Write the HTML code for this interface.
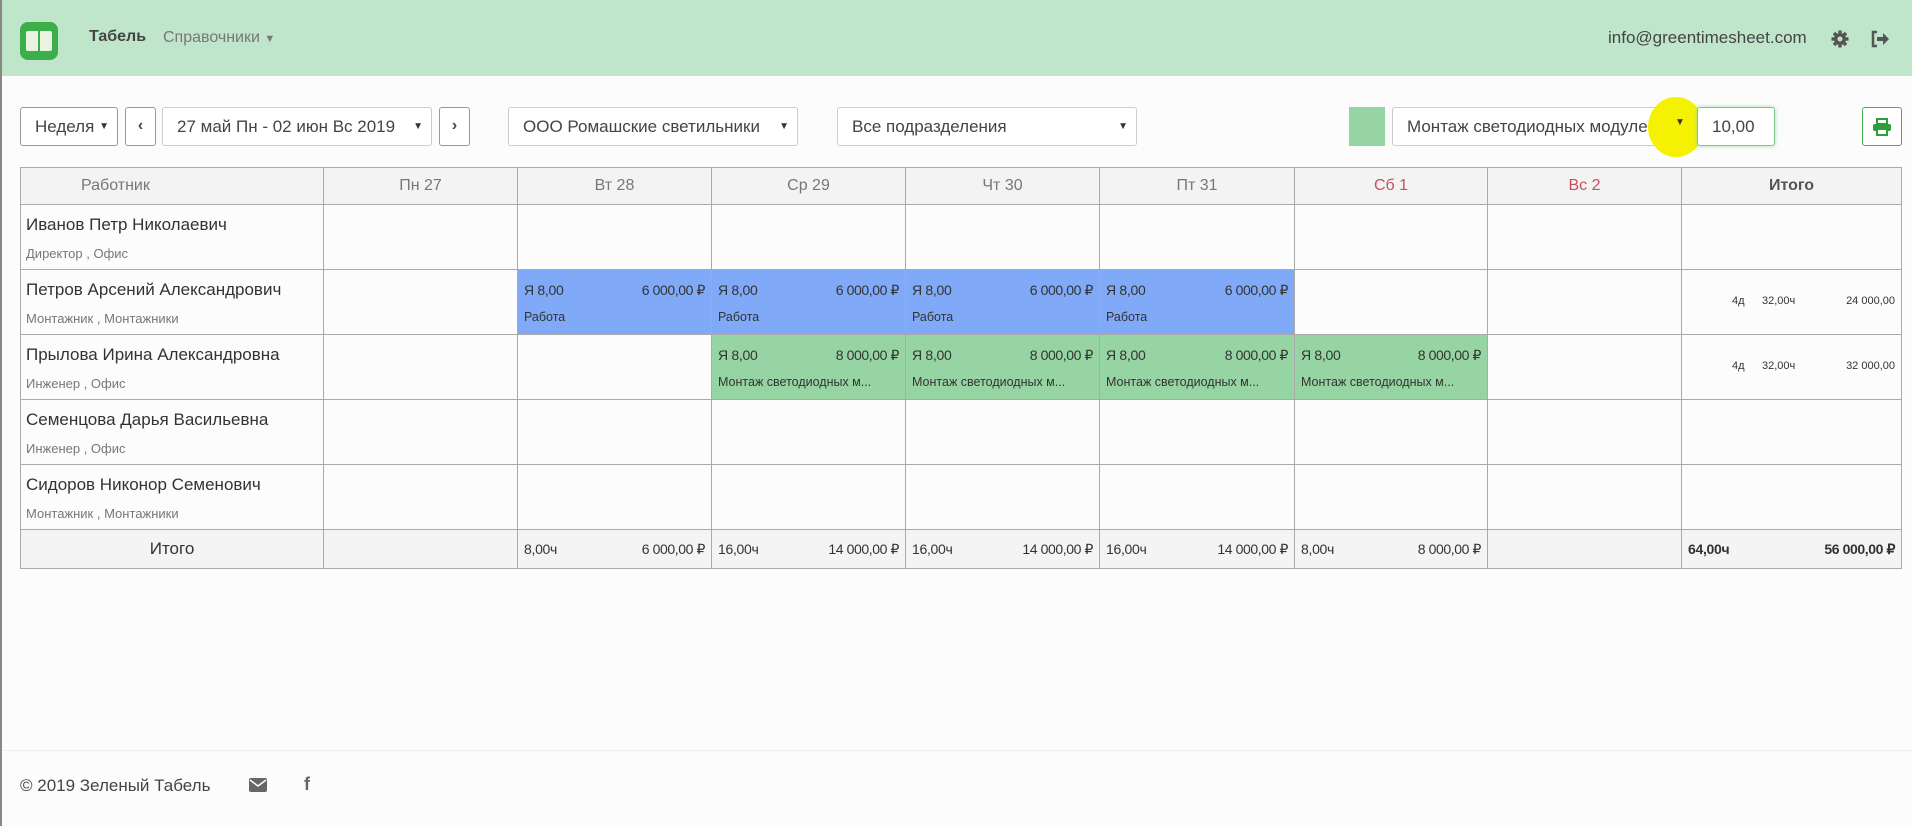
<!DOCTYPE html>
<html><head><meta charset="utf-8"><style>
*{box-sizing:border-box;margin:0;padding:0}
body{width:1912px;height:826px;background:#fcfcfc;font-family:"Liberation Sans",sans-serif;color:#333;position:relative;overflow:hidden;border-left:2px solid #888}
.abs{position:absolute}
.hdr{left:0;top:0;width:1912px;height:76px;background:#bfe6cb}
.sel{position:absolute;top:107px;height:39px;border:1px solid #ccc;border-radius:3px;background:#fff;font-size:17px;line-height:37px;padding-left:14px;color:#444}
.sel .c{position:absolute;right:8px;top:0;font-size:10px;color:#333}
.btn{position:absolute;top:107px;height:39px;border:1px solid #999;border-radius:3px;background:#fff;text-align:center;line-height:36px;font-size:16px;font-weight:bold;color:#444}
table{position:absolute;left:18px;top:167px;border-collapse:collapse;table-layout:fixed}
td,th{border:1px solid #aaa;padding:0;position:relative;vertical-align:top}
th{height:37px;background:#f3f3f3;font-weight:normal;font-size:16px;color:#777;line-height:36px}
tr.r td{height:65px}
.nm{position:absolute;left:5px;top:10px;font-size:17px;color:#333;white-space:nowrap}
.sb{position:absolute;left:5px;top:41px;font-size:13px;color:#777;white-space:nowrap}
.blue{background:#80a9f7}.green{background:#97d4a3}
.t1{position:absolute;left:6px;top:12px;font-size:14px;color:#333;letter-spacing:-0.3px}
.t2{position:absolute;right:6px;top:12px;font-size:14px;color:#333;letter-spacing:-0.4px}
.t3{position:absolute;left:6px;top:40px;font-size:12.5px;color:#333;white-space:nowrap}
.tot td{height:39px;background:#f4f4f4}
.tot .t1,.tot .t2{top:11px}
.sm{position:absolute;top:25px;font-size:11px;color:#333}
</style></head><body>
<div class="abs hdr"></div>
<div class="abs" style="left:18px;top:22px;width:38px;height:38px;border-radius:8px;background:#3cae4a">
<div class="abs" style="left:6px;top:9px;width:26px;height:20px;background:#e9f3df;border-radius:2px"></div>
<div class="abs" style="left:18px;top:9px;width:2px;height:20px;background:#3cae4a"></div>
</div>
<div class="abs" style="left:87px;top:28px;font-size:16px;font-weight:bold;color:#444">Табель</div>
<div class="abs" style="left:161px;top:29px;font-size:16px;color:#777">Справочники <span style="font-size:11px">▼</span></div>
<div class="abs" style="left:1606px;top:28px;font-size:17px;color:#444">info@greentimesheet.com</div>
<svg class="abs" style="left:1829px;top:30px" width="18" height="18" viewBox="0 0 18 18"><g fill="#555"><circle cx="9" cy="9" r="6"/><rect x="7.3" y="0.5" width="3.4" height="17"/><rect x="0.5" y="7.3" width="17" height="3.4"/><rect x="7.3" y="0.5" width="3.4" height="17" transform="rotate(45 9 9)"/><rect x="7.3" y="0.5" width="3.4" height="17" transform="rotate(-45 9 9)"/></g><circle cx="9" cy="9" r="2.5" fill="#bfe6cb"/></svg>
<svg class="abs" style="left:1868px;top:30px" width="20" height="18" viewBox="0 0 20 18"><path d="M7 2H3v14h4" fill="none" stroke="#555" stroke-width="2.5"/><path d="M7 7h6V3l6 6-6 6v-4H7z" fill="#555"/></svg>

<div class="sel" style="left:18px;width:98px;border-color:#999">Неделя<span class="c">▼</span></div>
<div class="btn" style="left:123px;width:31px">‹</div>
<div class="sel" style="left:160px;width:270px">27 май Пн - 02 июн Вс 2019<span class="c">▼</span></div>
<div class="btn" style="left:437px;width:31px">›</div>
<div class="sel" style="left:506px;width:290px">ООО Ромашские светильники<span class="c">▼</span></div>
<div class="sel" style="left:835px;width:300px">Все подразделения<span class="c">▼</span></div>
<div class="abs" style="left:1347px;top:107px;width:36px;height:39px;background:#97d4a3"></div>
<div class="sel" style="left:1390px;width:299px;overflow:hidden;white-space:nowrap;padding-right:30px">Монтаж светодиодных модулей</div>
<div class="abs" style="left:1646px;top:97px;width:56px;height:60px;border-radius:50%;background:#f4f200"></div>
<div class="abs" style="left:1673px;top:117px;font-size:10px">▼</div>
<div class="sel" style="left:1695px;width:78px;border-color:#7ac98a;box-shadow:0 0 4px #9ed9aa">10,00</div>
<div class="btn" style="left:1860px;width:40px;border-color:#4caf50">
<svg width="20" height="18" viewBox="0 0 20 18" style="margin-top:10px"><rect x="5" y="1" width="10" height="5" fill="none" stroke="#2e9e3c" stroke-width="2"/><rect x="1" y="6" width="18" height="7" rx="2" fill="#2e9e3c"/><rect x="5" y="11" width="10" height="6" fill="#fff" stroke="#2e9e3c" stroke-width="2"/></svg></div>

<table>
<colgroup><col style="width:303px"><col style="width:194px"><col style="width:194px"><col style="width:194px"><col style="width:194px"><col style="width:195px"><col style="width:193px"><col style="width:194px"><col style="width:220px"></colgroup>
<tr><th style="text-align:left;padding-left:60px">Работник</th><th>Пн 27</th><th>Вт 28</th><th>Ср 29</th><th>Чт 30</th><th>Пт 31</th><th style="color:#c9505c">Сб 1</th><th style="color:#c9505c">Вс 2</th><th style="font-weight:bold;color:#555">Итого</th></tr>
<tr class="r"><td><div class="nm">Иванов Петр Николаевич</div><div class="sb">Директор , Офис</div></td><td></td><td></td><td></td><td></td><td></td><td></td><td></td><td></td></tr>
<tr class="r"><td><div class="nm">Петров Арсений Александрович</div><div class="sb">Монтажник , Монтажники</div></td><td></td>
<td class="blue"><div class="t1">Я 8,00</div><div class="t2">6 000,00 ₽</div><div class="t3">Работа</div></td>
<td class="blue"><div class="t1">Я 8,00</div><div class="t2">6 000,00 ₽</div><div class="t3">Работа</div></td>
<td class="blue"><div class="t1">Я 8,00</div><div class="t2">6 000,00 ₽</div><div class="t3">Работа</div></td>
<td class="blue"><div class="t1">Я 8,00</div><div class="t2">6 000,00 ₽</div><div class="t3">Работа</div></td>
<td></td><td></td><td><span class="sm" style="left:50px">4д</span><span class="sm" style="left:80px">32,00ч</span><span class="sm" style="right:6px">24 000,00</span></td></tr>
<tr class="r"><td><div class="nm">Прылова Ирина Александровна</div><div class="sb">Инженер , Офис</div></td><td></td><td></td>
<td class="green"><div class="t1">Я 8,00</div><div class="t2">8 000,00 ₽</div><div class="t3">Монтаж светодиодных м...</div></td>
<td class="green"><div class="t1">Я 8,00</div><div class="t2">8 000,00 ₽</div><div class="t3">Монтаж светодиодных м...</div></td>
<td class="green"><div class="t1">Я 8,00</div><div class="t2">8 000,00 ₽</div><div class="t3">Монтаж светодиодных м...</div></td>
<td class="green"><div class="t1">Я 8,00</div><div class="t2">8 000,00 ₽</div><div class="t3">Монтаж светодиодных м...</div></td>
<td></td><td><span class="sm" style="left:50px">4д</span><span class="sm" style="left:80px">32,00ч</span><span class="sm" style="right:6px">32 000,00</span></td></tr>
<tr class="r"><td><div class="nm">Семенцова Дарья Васильевна</div><div class="sb">Инженер , Офис</div></td><td></td><td></td><td></td><td></td><td></td><td></td><td></td><td></td></tr>
<tr class="r"><td><div class="nm">Сидоров Никонор Семенович</div><div class="sb">Монтажник , Монтажники</div></td><td></td><td></td><td></td><td></td><td></td><td></td><td></td><td></td></tr>
<tr class="tot"><td style="text-align:center;font-size:17px;line-height:38px">Итого</td><td></td>
<td><div class="t1">8,00ч</div><div class="t2">6 000,00 ₽</div></td>
<td><div class="t1">16,00ч</div><div class="t2">14 000,00 ₽</div></td>
<td><div class="t1">16,00ч</div><div class="t2">14 000,00 ₽</div></td>
<td><div class="t1">16,00ч</div><div class="t2">14 000,00 ₽</div></td>
<td><div class="t1">8,00ч</div><div class="t2">8 000,00 ₽</div></td>
<td></td>
<td><div class="t1" style="font-weight:bold">64,00ч</div><div class="t2" style="font-weight:bold">56 000,00 ₽</div></td></tr>
</table>

<div class="abs" style="left:0;top:750px;width:1912px;height:1px;background:#eee"></div>
<div class="abs" style="left:18px;top:776px;font-size:17px;color:#444">© 2019 Зеленый Табель</div>
<svg class="abs" style="left:247px;top:778px" width="18" height="14" viewBox="0 0 18 14"><rect width="18" height="14" rx="2" fill="#666"/><path d="M1 2l8 6 8-6" fill="none" stroke="#fcfcfc" stroke-width="1.5"/></svg>
<div class="abs" style="left:302px;top:774px;font-size:18px;color:#666;font-weight:bold">f</div>
</body></html>
